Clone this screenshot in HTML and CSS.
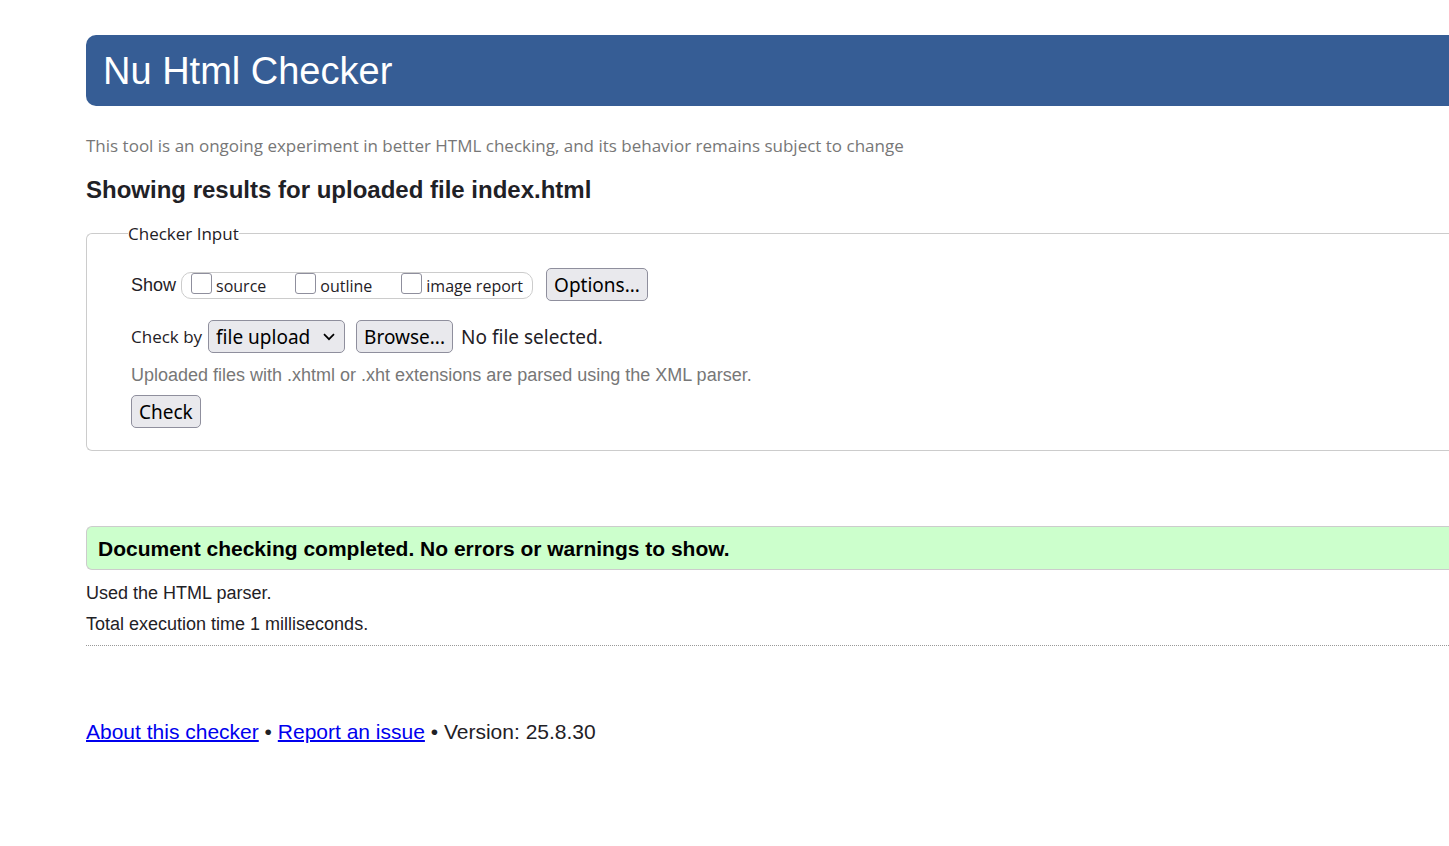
FILE: index.html
```html
<!DOCTYPE html>
<html lang="en">
<head>
<meta charset="utf-8">
<title>Showing results for uploaded file index.html</title>
<link rel="stylesheet" href="styles.css">
</head>
<body>
<header class="banner"><h1 class="banner-title">Nu Html Checker</h1></header>
<main>
  <p class="intro">This tool is an ongoing experiment in better HTML checking, and its behavior remains subject to change</p>
  <h2 class="heading">Showing results for uploaded file index.html</h2>
  <form>
    <fieldset class="panel">
      <legend class="legend">Checker Input</legend>
      <div class="row show-row">
        <span class="show-label">Show</span>
        <span class="checks">
          <label class="check"><input type="checkbox" class="box">source</label>
          <label class="check"><input type="checkbox" class="box">outline</label>
          <label class="check"><input type="checkbox" class="box">image report</label>
        </span>
        <button type="button" class="btn options">Options...</button>
      </div>
      <div class="row">
        <label class="by-label" for="docselect">Check by</label>
        <span class="select-wrap">
          <select id="docselect" class="btn select"><option>file upload</option></select>
          <svg class="chevron" viewBox="0 0 12 8" aria-hidden="true"><path d="M1 1.2 6 6.2 11 1.2" fill="none" stroke="#000" stroke-width="1.7"/></svg>
        </span>
        <button type="button" class="btn browse">Browse...</button>
        <span class="file-name">No file selected.</span>
      </div>
      <p class="hint">Uploaded files with .xhtml or .xht extensions are parsed using the XML parser.</p>
      <button type="submit" class="btn">Check</button>
    </fieldset>
  </form>
  <p class="success">Document checking completed. No errors or warnings to show.</p>
  <div class="details">
    <p class="detail">Used the HTML parser.</p>
    <p class="detail">Total execution time 1 milliseconds.</p>
  </div>
</main>
<footer class="footer"><a href="#about">About this checker</a> • <a href="#issues">Report an issue</a> • Version: 25.8.30</footer>
</body>
</html>
```
FILE: styles.css
```css
* { box-sizing: border-box; }
body {
  margin: 0;
  padding: 35px 0 40px 86px;
  background: #fff;
  color: #1f2126;
  font-family: "Liberation Sans", Arial, sans-serif;
  font-size: 18px;
  line-height: 24px;
}
h1, h2, p { margin: 0; }
.banner {
  padding: 14px 17px 13px;
  background: #365d95;
  border-radius: 10px 0 0 10px;
}
.banner-title {
  color: #fff;
  font-size: 38px;
  font-weight: 400;
  line-height: 44px;
}
.intro {
  margin-top: 28px;
  color: #777;
  font-family: "Open Sans", "Noto Sans", sans-serif;
  font-size: 17px;
}
.heading {
  margin-top: 18px;
  font-size: 24px;
  line-height: 28px;
}
.panel {
  margin: 18px 0 0;
  padding: 23px 0 22px 44px;
  border: 1px solid #ccc;
  border-right: 0;
  border-radius: 6px 0 0 6px;
  min-width: 0;
}
.legend {
  margin-left: -3px;
  padding: 0;
  font-family: "Open Sans", "Noto Sans", sans-serif;
  font-size: 17px;
  line-height: 23px;
}
.row { display: flex; align-items: center; }
.show-row { margin-bottom: 19px; }
.show-label { margin-right: 5px; }
.checks {
  display: flex;
  align-items: center;
  gap: 29px;
  height: 27px;
  margin-top: 2px;
  padding: 0 9px;
  border: 1px solid #ccc;
  border-radius: 10px;
}
.check {
  display: flex;
  align-items: center;
  gap: 4px;
  font-family: "Open Sans", "Noto Sans", sans-serif;
  font-size: 16px;
}
.box {
  appearance: none;
  width: 21px;
  height: 21px;
  margin: 0 0 4px;
  border: 1px solid #8f8f9d;
  border-radius: 3px;
  background: #fff;
}
.box:checked { background: #0060df; }
.btn {
  display: block;
  height: 33px;
  margin: 0;
  padding: 0 7px;
  border: 1px solid #8f8f9d;
  border-radius: 5px;
  background: #e9e9ed;
  color: #000;
  font-family: "Noto Sans", sans-serif;
  font-size: 19px;
  line-height: 28px;
}
.options { margin-left: 13px; }
.by-label {
  margin-right: 6px;
  font-family: "Open Sans", "Noto Sans", sans-serif;
  font-size: 17px;
}
.select-wrap { position: relative; }
.select { appearance: none; padding-right: 33px; }
.chevron {
  position: absolute;
  top: 13px;
  right: 10px;
  width: 12px;
  height: 8px;
  pointer-events: none;
}
.browse { margin-left: 11px; }
.file-name {
  margin-left: 8px;
  font-family: "Noto Sans", sans-serif;
  font-size: 19px;
}
.hint { margin: 10px 0 8px; color: #777; }
.success {
  margin-top: 75px;
  padding: 10px 11px 8px;
  border: 1px solid #ccc;
  border-right: 0;
  border-radius: 6px 0 0 6px;
  background: #cfc;
  color: #000;
  font-size: 21px;
  font-weight: 700;
}
.details {
  display: grid;
  gap: 7px;
  padding: 11px 0 9px;
  border-bottom: 1px dotted #999;
}
.footer { margin-top: 74px; font-size: 21px; }
.footer a { color: #00e; text-decoration-thickness: 2px; }
```
